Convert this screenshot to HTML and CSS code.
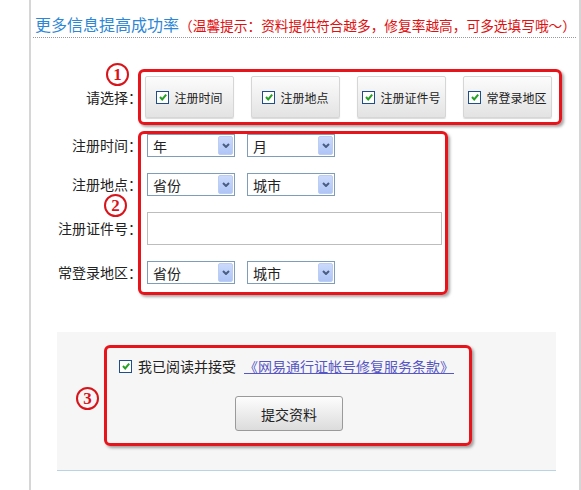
FILE: index.html
```html
<!DOCTYPE html>
<html lang="zh-CN">
<head>
    <meta charset="UTF-8">
    <meta name="viewport" content="width=device-width, initial-scale=1.0">
    <title>更多信息提高成功率</title>
    <link rel="stylesheet" href="styles.css">
</head>
<body>
    <div class="page">
        <div class="head">
            <span class="title">更多信息提高成功率</span><span class="tip">（温馨提示：资料提供符合越多，修复率越高，可多选填写哦～）</span>
        </div>

        <div class="form">
            <div class="row">
                <div class="label">请选择<span class="colon">：</span></div>
                <div class="mark box-pick">
                    <span class="num num-1">1</span>
                    <div class="pick"><span class="cb"><svg viewBox="0 0 10 10" width="10" height="10"><path d="M2 5 L4.2 7.4 L8.2 2.6" fill="none" stroke="#25a125" stroke-width="2"/></svg></span>注册时间</div>
                    <div class="pick"><span class="cb"><svg viewBox="0 0 10 10" width="10" height="10"><path d="M2 5 L4.2 7.4 L8.2 2.6" fill="none" stroke="#25a125" stroke-width="2"/></svg></span>注册地点</div>
                    <div class="pick"><span class="cb"><svg viewBox="0 0 10 10" width="10" height="10"><path d="M2 5 L4.2 7.4 L8.2 2.6" fill="none" stroke="#25a125" stroke-width="2"/></svg></span>注册证件号</div>
                    <div class="pick"><span class="cb"><svg viewBox="0 0 10 10" width="10" height="10"><path d="M2 5 L4.2 7.4 L8.2 2.6" fill="none" stroke="#25a125" stroke-width="2"/></svg></span>常登录地区</div>
                </div>
            </div>

            <div class="row row-fields">
                <div class="labels">
                    <div class="f-label">注册时间<span class="colon">：</span></div>
                    <div class="f-label">注册地点<span class="colon">：</span></div>
                    <div class="f-label">注册证件号<span class="colon">：</span></div>
                    <div class="f-label">常登录地区<span class="colon">：</span></div>
                </div>
                <div class="mark box-fields">
                    <span class="num num-2">2</span>
                    <div class="f-row">
                        <div class="sel"><span>年</span><span class="arrow"><svg viewBox="0 0 8 5" width="8" height="5"><path d="M1 1 L4 4 L7 1" fill="none" stroke="#4a5e82" stroke-width="2"/></svg></span></div>
                        <div class="sel"><span>月</span><span class="arrow"><svg viewBox="0 0 8 5" width="8" height="5"><path d="M1 1 L4 4 L7 1" fill="none" stroke="#4a5e82" stroke-width="2"/></svg></span></div>
                    </div>
                    <div class="f-row">
                        <div class="sel"><span>省份</span><span class="arrow"><svg viewBox="0 0 8 5" width="8" height="5"><path d="M1 1 L4 4 L7 1" fill="none" stroke="#4a5e82" stroke-width="2"/></svg></span></div>
                        <div class="sel"><span>城市</span><span class="arrow"><svg viewBox="0 0 8 5" width="8" height="5"><path d="M1 1 L4 4 L7 1" fill="none" stroke="#4a5e82" stroke-width="2"/></svg></span></div>
                    </div>
                    <div class="f-row">
                        <input class="txt" type="text">
                    </div>
                    <div class="f-row">
                        <div class="sel"><span>省份</span><span class="arrow"><svg viewBox="0 0 8 5" width="8" height="5"><path d="M1 1 L4 4 L7 1" fill="none" stroke="#4a5e82" stroke-width="2"/></svg></span></div>
                        <div class="sel"><span>城市</span><span class="arrow"><svg viewBox="0 0 8 5" width="8" height="5"><path d="M1 1 L4 4 L7 1" fill="none" stroke="#4a5e82" stroke-width="2"/></svg></span></div>
                    </div>
                </div>
            </div>
        </div>

        <div class="agree">
            <div class="mark box-agree">
                <span class="num num-3">3</span>
                <div class="agree-row">
                    <span class="cb"><svg viewBox="0 0 10 10" width="10" height="10"><path d="M2 5 L4.2 7.4 L8.2 2.6" fill="none" stroke="#25a125" stroke-width="2"/></svg></span>
                    <span class="agree-text">我已阅读并接受</span>
                    <a class="terms" href="#">《网易通行证帐号修复服务条款》</a>
                </div>
                <button class="submit">提交资料</button>
            </div>
        </div>
    </div>
</body>
</html>
```

FILE: styles.css
```css
body {
    margin: 0;
    background-color: #fff;
    font-family: "Noto Sans CJK SC", sans-serif;
    color: #222;
}
.page {
    margin-left: 29px;
    width: 548px;
    min-height: 490px;
    border-left: 2px solid #d6d6d6;
    border-right: 2px solid #d6d6d6;
}
.head {
    margin: 0 3px 0 2px;
    padding: 14px 0 2px 2px;
    line-height: 20px;
    white-space: nowrap;
    border-bottom: 1px dotted #999;
}
.title {
    font-size: 16px;
    color: #2c87d6;
}
.tip {
    font-size: 13.7px;
    color: #e01010;
}

/* red annotation boxes */
.mark {
    position: relative;
    border: 3px solid #e8141b;
    border-radius: 6px;
    box-shadow: 2px 2px 3px rgba(0, 0, 0, 0.35);
}
.num {
    position: absolute;
    width: 19px;
    height: 19px;
    border: 2px solid #d8141a;
    border-radius: 50%;
    color: #d8141a;
    font: bold 17px/19px "Liberation Serif", serif;
    text-align: center;
}
.num-1 { left: -35px; top: -9px; }
.num-2 { left: -37px; top: 60px; }
.num-3 { left: -31px; top: 39px; }

.form {
    margin-top: 31px;
}
.row {
    display: flex;
}
.label {
    width: 111px;
    margin-right: -4px;
    align-self: center;
    text-align: right;
    font-size: 14px;
}
.colon {
    display: inline-block;
    width: 14px;
    text-align: center;
}
.box-pick {
    display: flex;
    gap: 17px;
    padding: 4px 7px 4px 4px;
}
.pick {
    width: 89px;
    height: 42px;
    box-sizing: border-box;
    border: 1px solid #d6d6d6;
    border-radius: 2px;
    background: linear-gradient(#fcfcfc, #e3e3e3);
    box-shadow: 0 1px 1px rgba(0, 0, 0, 0.15);
    display: flex;
    align-items: center;
    justify-content: center;
    gap: 5px;
    font-size: 12px;
}
.cb {
    display: inline-flex;
    width: 11px;
    height: 11px;
    border: 1px solid #1e4f86;
    background-color: #fff;
    align-items: center;
    justify-content: center;
    flex-shrink: 0;
}

.row-fields {
    margin-top: 6px;
}
.labels {
    width: 111px;
    margin-right: -4px;
    padding-top: 3px;
    display: grid;
    grid-template-rows: 23px 23px 33px 23px;
    row-gap: 16px;
    align-content: start;
}
.f-label {
    text-align: right;
    font-size: 14px;
    line-height: 23px;
    align-self: center;
}
.box-fields {
    width: 310px;
    box-sizing: border-box;
    padding: 0 3px 8px 6px;
    display: grid;
    grid-template-rows: 23px 23px 33px 23px;
    row-gap: 16px;
}
.f-row {
    display: flex;
    gap: 12px;
}
.sel {
    width: 88px;
    height: 23px;
    box-sizing: border-box;
    border: 1px solid #7f9db9;
    background-color: #fff;
    padding: 1px;
    display: flex;
    align-items: center;
    justify-content: space-between;
    font-size: 14px;
}
.sel span:first-child {
    padding-left: 4px;
}
.arrow {
    width: 13px;
    height: 17px;
    border: 1px solid #bccdf4;
    border-radius: 2px;
    background: linear-gradient(#cbdafc, #afc5f6);
    display: flex;
    align-items: center;
    justify-content: center;
}
.txt {
    width: 295px;
    height: 33px;
    box-sizing: border-box;
    border: 1px solid #bdbdbd;
    margin: 0;
    padding: 0 4px;
}

.agree {
    margin: 37px 23px 0 26px;
    padding: 13px 0 24px 47px;
    background-color: #f6f6f6;
    border-bottom: 1px solid #b9d3e6;
}
.box-agree {
    width: 368px;
    box-sizing: border-box;
    padding: 8px 0 12px 12px;
}
.agree-row {
    display: flex;
    align-items: center;
    height: 20px;
    font-size: 14px;
}
.agree-text {
    margin-left: 6px;
}
.terms {
    margin-left: 8px;
    color: #5656c4;
}
.submit {
    display: block;
    margin: 20px 0 0 116px;
    width: 108px;
    height: 35px;
    border: 1px solid #9a9a9a;
    border-radius: 3px;
    background: linear-gradient(#fdfdfd, #dcdcdc);
    font-family: "Noto Sans CJK SC", sans-serif;
    font-size: 14px;
    color: #222;
}
```
